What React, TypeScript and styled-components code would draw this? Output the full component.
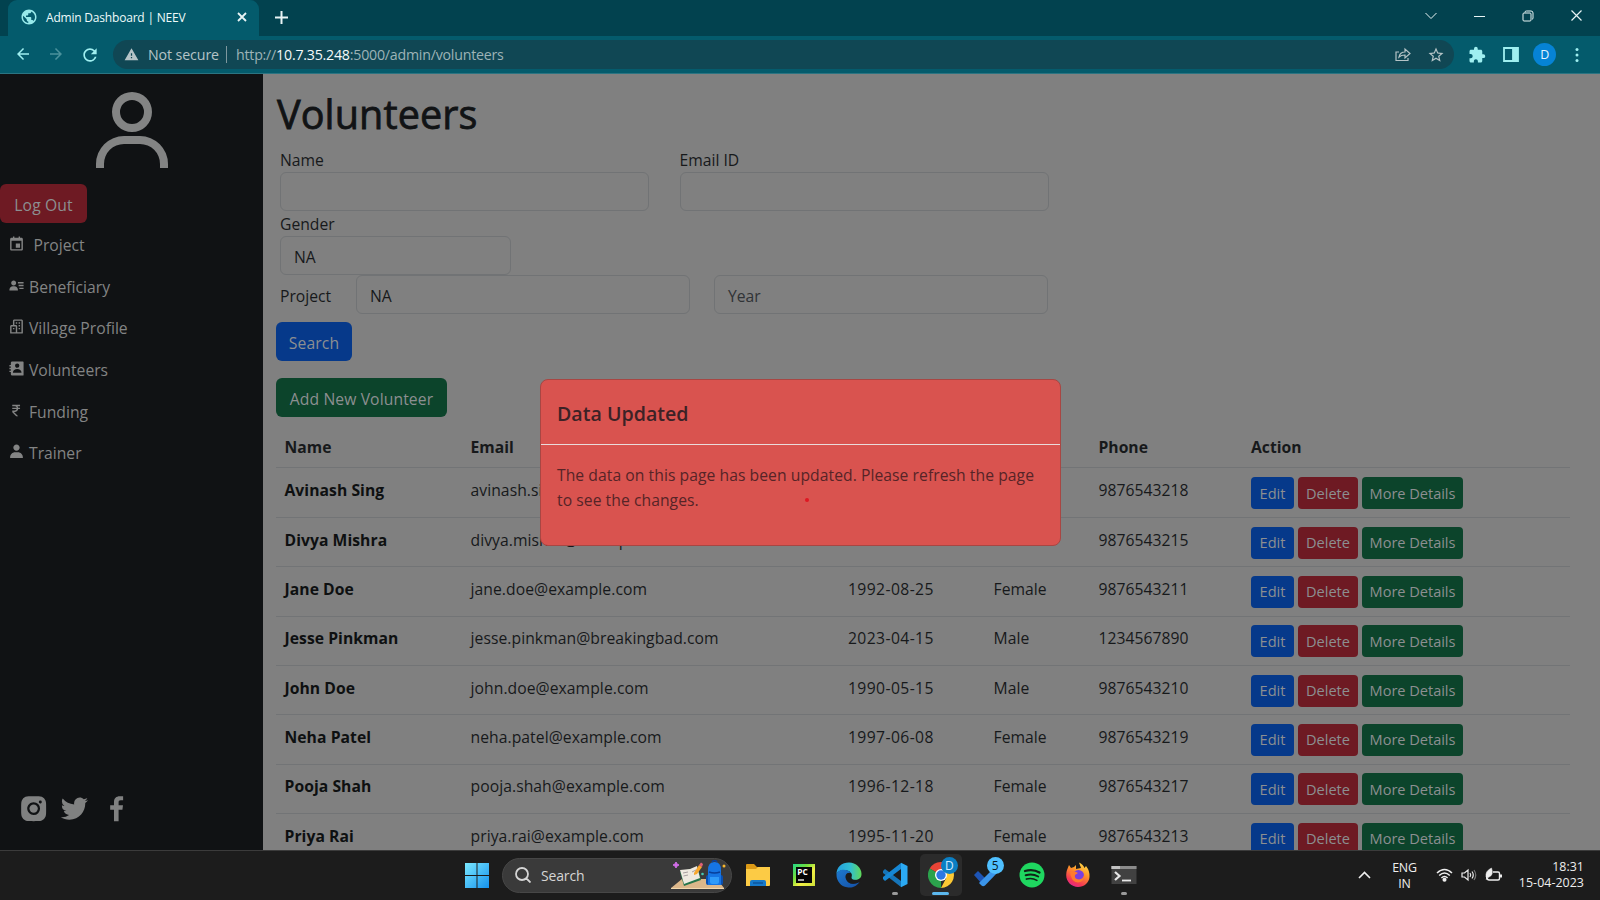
import React from "react";
import styled, { createGlobalStyle } from "styled-components";
import {
  BiUser, BiCalendarEvent, BiSolidUserDetail, BiBuildings, BiSolidContact, BiRupee, BiSolidUser,
  BiLogoInstagramAlt, BiLogoTwitter, BiLogoFacebook,
} from "react-icons/bi";
import { MdPublic, MdExtension, MdWarning, MdArrowBack, MdArrowForward, MdRefresh, MdStarBorder } from "react-icons/md";

const Global = createGlobalStyle`
  *{box-sizing:border-box}
  body{margin:0;overflow:hidden;font-family:"Open Sans","Noto Sans",sans-serif;font-size:15.7px}
  svg{display:block;flex:none}
`;
const Screen = styled.div`width:1600px;height:900px;display:flex;flex-direction:column;overflow:hidden;background:#808080;white-space:nowrap;`;

/* browser chrome */
const TabStrip = styled.header`height:36px;background:#02424f;display:flex;align-items:center;padding-left:8px;color:#e8f4f5;flex:none;`;
const Tab = styled.div`width:251px;height:36px;background:#045b6c;border-radius:9px 9px 0 0;display:flex;align-items:center;padding:0 12.5px 2px 12px;`;
const TabTitle = styled.span`font-size:12px;letter-spacing:-.2px;margin-left:8px;flex:1;color:#eefafa;`;
const NewTab = styled.div`margin-left:16px;flex:1;padding-bottom:1px;`;
const WindowButtons = styled.div`display:flex;align-items:center;gap:37px;padding:0 18px 5px 0;`;
const Toolbar = styled.div`height:38px;background:#045b6c;display:flex;align-items:center;flex:none;color:#9feff0;padding:0 21px 0 14px;border-bottom:1px solid #2b7482;`;
const NavIcons = styled.div`display:flex;gap:15px;width:99px;`;
const Omnibox = styled.div`width:1341px;height:29px;border-radius:15px;background:#104754;display:flex;align-items:center;padding:0 9px 0 11px;color:#b5c4c7;font-size:14.2px;`;
const NotSecure = styled.span`margin-left:9px;width:70px;letter-spacing:-.1px;`;
const Divider = styled.i`width:1px;height:17px;background:#7e989e;margin:0 9px 0 8px;`;
const Url = styled.span`flex:1;letter-spacing:-.22px;color:#9db3b7;b{font-weight:400;color:#f4fafa;}`;
const OmniActions = styled.div`display:flex;gap:16px;align-items:center;`;
const ToolActions = styled.div`display:flex;flex:1;align-items:center;justify-content:space-between;padding-left:14px;`;
const Avatar = styled.div`width:23px;height:23px;border-radius:50%;background:#0683d5;color:#e4f4ff;font-size:12.5px;display:grid;place-items:center;margin:0 2px 0 -2px;`;

/* page */
const Page = styled.div`height:776px;display:flex;position:relative;overflow:hidden;flex:none;`;
const Sidebar = styled.aside`width:263px;background:#101214;color:#838484;display:flex;flex-direction:column;padding-top:10px;flex:none;`;
const Portrait = styled.div`height:100px;display:flex;justify-content:center;`;
const Button = styled.button<{ $bg: string; $w: number }>`
  font:inherit;border:0;padding:3px 0 0;width:${p => p.$w}px;height:39px;border-radius:6px;background:${p => p.$bg};color:#8c8f91;display:block;flex:none;letter-spacing:.1px;`;
const Menu = styled.nav`display:flex;flex-direction:column;padding-top:1.3px;`;
const MenuItem = styled.a<{ $gap: number }>`height:41.65px;padding:0 0 0 8px;display:flex;align-items:center;gap:${p => p.$gap}px;svg{margin-top:-3px;}`;
const Social = styled.div`margin-top:auto;display:flex;gap:8.3px;padding:0 0 25px 16.5px;color:#808181;`;
const Main = styled.main`flex:1;padding:14px 30px 0 13px;color:#17191b;`;
const Title = styled.h1`margin:0;padding-left:1px;font-size:39.6px;line-height:53px;font-weight:500;color:#111315;height:59px;letter-spacing:.1px;-webkit-text-stroke:.8px #111315;`;
const Form = styled.div`padding-left:4px;`;
const FormRow = styled.div<{ $gap: number; $h: number }>`display:flex;gap:${p => p.$gap}px;height:${p => p.$h}px;align-items:center;`;
const Field = styled.label<{ $w: number }>`width:${p => p.$w}px;display:flex;flex-direction:column;line-height:25px;span{padding-top:1px;height:25px;}`;
const Box = styled.div<{ $w: number; $muted?: boolean }>`width:${p => p.$w}px;height:39px;border:1px solid #717375;border-radius:6px;line-height:40px;padding-left:13px;color:${p => (p.$muted ? "#303336" : "#17191b")};`;
const InlineLabel = styled.span`width:76px;padding:2px 0 0;`;
const YearSlot = styled.div`margin-left:24.5px;`;
const Actions = styled.div`display:flex;flex-direction:column;gap:17px;padding-top:8px;`;
const Table = styled.div`margin-top:9.2px;`;
const Row = styled.div<{ $head?: boolean }>`
  display:grid;grid-template-columns:186px 377.5px 145.5px 105px 152.5px 1fr;padding-left:8.5px;width:1294px;
  height:${p => (p.$head ? 42.3 : 49.35)}px;padding-top:${p => (p.$head ? 9 : 9.7)}px;line-height:25px;
  border-bottom:1px solid #727476;font-weight:${p => (p.$head ? 700 : 400)};font-size:15.7px;`;
const Strong = styled.span`font-weight:700;color:#0e1011;letter-spacing:.05px;`;
const Cell = styled.span<{ $ls?: number }>`letter-spacing:${p => p.$ls ?? 0.03}px;`;
const Small = styled.button<{ $bg: string; $w: number }>`
  font:inherit;font-size:14.6px;letter-spacing:-.03px;border:0;padding:0;width:${p => p.$w}px;height:32px;border-radius:4px;background:${p => p.$bg};color:#8c8f91;`;
const SmallGroup = styled.span`display:flex;gap:4px;margin-top:-1px;`;

const Modal = styled.section`position:absolute;left:540px;top:305px;width:521px;height:167px;border-radius:8px;background:#d9534f;border:1px solid #a84643;`;
const ModalHead = styled.h5`margin:0;height:65px;border-bottom:1px solid #eadbdb;padding:18px 0 0 16px;font-size:19.6px;line-height:31px;font-weight:600;color:#3c2226;letter-spacing:0;`;
const ModalBody = styled.p`margin:0;padding:18px 0 0 16px;line-height:25px;color:#562427;letter-spacing:.05px;`;
const Pointer = styled.i`position:absolute;left:264px;top:118px;width:4px;height:4px;border-radius:50%;background:#e01722;`;

/* taskbar */
const Taskbar = styled.footer`height:50px;background:#1c1c1c;border-top:1px solid #3b3b3b;display:flex;align-items:center;color:#eee;padding:0 16px 1px 465px;`;
const SearchPill = styled.div`margin:0 13px;width:230px;height:35px;border-radius:18px;background:#3a3a3a;border:1px solid #474747;display:flex;align-items:center;padding:0 5px 0 12px;font-size:14px;color:#d5d5d5;span{flex:1;margin-left:10px;letter-spacing:-.15px;}`;
const Apps = styled.div`display:flex;gap:3.8px;margin-left:-8.3px;`;
const AppTile = styled.div<{ $on?: boolean; $mark?: string }>`
  width:42px;height:42px;border-radius:5px;background:${p => (p.$on ? "#2b2b2b" : "transparent")};display:grid;place-items:center;position:relative;
  &::after{content:"";position:absolute;bottom:1px;height:3px;border-radius:2px;width:${p => (p.$on ? 17 : 6)}px;background:${p => p.$mark || "transparent"};}`;
const Badge = styled.b<{ $bg: string; $c: string }>`position:absolute;right:4px;top:3px;width:17px;height:17px;border-radius:50%;background:${p => p.$bg};color:${p => p.$c};font-size:12px;line-height:17px;text-align:center;font-weight:400;`;
const Tray = styled.div`margin-left:auto;display:flex;align-items:center;font-size:12.4px;line-height:16.5px;`;
const Lang = styled.div`margin:2px 19px 0 21px;width:25px;text-align:center;letter-spacing:-.2px;`;
const TrayIcons = styled.div`display:flex;align-items:center;gap:8px;`;
const Clock = styled.div`margin-left:16px;width:66px;display:flex;flex-direction:column;align-items:flex-end;letter-spacing:.05px;`;

const BLUE = "#06398a", RED = "#6e1a23", GREEN = "#0c442b";
const people = [
  ["Avinash Sing", "avinash.si", "", "", "9876543218"],
  ["Divya Mishra", "divya.mishra@example.com", "", "", "9876543215"],
  ["Jane Doe", "jane.doe@example.com", "1992-08-25", "Female", "9876543211"],
  ["Jesse Pinkman", "jesse.pinkman@breakingbad.com", "2023-04-15", "Male", "1234567890"],
  ["John Doe", "john.doe@example.com", "1990-05-15", "Male", "9876543210"],
  ["Neha Patel", "neha.patel@example.com", "1997-06-08", "Female", "9876543219"],
  ["Pooja Shah", "pooja.shah@example.com", "1996-12-18", "Female", "9876543217"],
  ["Priya Rai", "priya.rai@example.com", "1995-11-20", "Female", "9876543213"],
];
const menu: [React.ComponentType<{ size?: number }>, string][] = [
  [BiCalendarEvent, "Project"], [BiSolidUserDetail, "Beneficiary"], [BiBuildings, "Village Profile"],
  [BiSolidContact, "Volunteers"], [BiRupee, "Funding"], [BiSolidUser, "Trainer"],
];

const Line = ({ d, w = 12, h = 12, sw = 1 }: { d: string; w?: number; h?: number; sw?: number }) => (
  <svg width={w} height={h} viewBox={`0 0 ${w} ${h}`} fill="none" stroke="currentColor" strokeWidth={sw}><path d={d} /></svg>
);

const Illustration = () => (
  <svg width="56" height="30" viewBox="0 0 56 30">
    <path d="M1 28 12 19H47L54 28Z" fill="#dcb78a" /><path d="M1 28H54V29H1Z" fill="#f2d8ae" />
    <path d="M10 12 20 9 28 8 31 20 14 26Z" fill="#26754b" /><path d="M10 10 20 9 22 21 14 24ZM20 9 27 6 30 18 22 21Z" fill="#eee9df" />
    <path d="M13 13 18 12M13.500 16 18 15M22 12 26 10" stroke="#a79f9f" />
    <path d="M24 13 29 5 32 7 27 14 24 15Z" fill="#f7a72c" /><path d="M29 5 31 2.500 33 4 32 7Z" fill="#e16177" />
    <path d="M38 10Q38 2 44.500 2T51 10V25H38Z" fill="#1675e4" /><path d="M36 17Q36 15 38 15V25Q36 25 36 23ZM51 15Q53 15 53 17V23Q53 25 51 25Z" fill="#0b4faf" />
    <path d="M40 17H49V22Q49 24 47 24H42Q40 24 40 22Z" fill="#2f9bfa" /><path d="M42 2Q44.500 -1 47 2M39 12Q44.500 14 50 12" fill="none" stroke="#083f9b" strokeWidth="1.500" />
    <path d="M6 2 7 4 9 5 7 6 6 8 5 6 3 5 5 4Z" fill="#d26ee8" stroke="#d26ee8" /><circle cx="54" cy="6" r="1.500" fill="#f6b62e" /><circle cx="32.500" cy="14" r="1.300" fill="#43cbb7" />
  </svg>
);
const Folder = () => (
  <svg width="26" height="24" viewBox="0 0 26 24"><path d="M1 2Q1 1 2 1H9L12 4H24V12H1Z" fill="#dc9a16" /><path d="M1 6H11L13 4H25V22Q25 23 24 23H1Z" fill="#fccb45" /><path d="M5 23V19Q5 17 7 17H19Q21 17 21 19V23Z" fill="#1679ca" /><path d="M8 20H18" stroke="#0c549b" strokeWidth="1.500" /></svg>
);
const PyCharm = () => (
  <svg width="22" height="22" viewBox="0 0 22 22"><defs><linearGradient id="pc" x2="1" y2="1"><stop stopColor="#21d789" /><stop offset=".35" stopColor="#73df3c" /><stop offset=".6" stopColor="#f3ef45" /><stop offset="1" stopColor="#cddf38" /></linearGradient></defs><path d="M0 0H22V22H0Z" fill="url(#pc)" /><path d="M3 3H19V19H3Z" fill="#050505" /><text x="4.300" y="11" fontSize="8.300" fontWeight="700" fontFamily="Open Sans" fill="#fff">PC</text><path d="M5 16H11" stroke="#fff" strokeWidth="1.300" /></svg>
);
const Edge = () => (
  <svg width="26" height="26" viewBox="0 0 26 26"><defs><linearGradient id="eg"><stop stopColor="#239fe0" /><stop offset=".55" stopColor="#31bed2" /><stop offset="1" stopColor="#60d957" /></linearGradient><linearGradient id="eb" y2="1"><stop stopColor="#1d79cf" /><stop offset="1" stopColor="#1550a6" /></linearGradient></defs>
    <path d="M.500 13C0 5 6 .500 13 .500S25.500 6 25.500 12c0 4-3 6-6.500 6-3 0-4-1.500-3.500-3 .600-1.600.500-3-.500-4C11 6 1 8 .500 13Z" fill="url(#eg)" />
    <path d="M.500 13C1 7 11 6 15 11c-5-1-6 3-5 6 1.500 5 8 6 13.500 3C20 25 16 26 11 25.300 5 24.500 .500 19 .500 13Z" fill="url(#eb)" /><path d="M10 17C9 13 10 11 14.500 11 16 13 15 14.500 15.300 16 16 18 20 18.500 23 17c1.500-.500 1.800.500 1 2C20 23.500 12 23 10 17Z" fill="#1c1c1c" opacity=".65" /></svg>
);
const Code = () => (
  <svg width="26" height="26" viewBox="0 0 26 26"><path d="M1 9 3 7 19 19V25L1 11Z" fill="#1675b9" /><path d="M1 17 3 19 19 7V1L1 15Z" fill="#1687d4" /><path d="M18.500 8V18L12 13Z" fill="#1c1c1c" /><path d="M19 .800 25.500 4V22L19 25.200Z" fill="#2ba9f3" /></svg>
);
const Chrome = () => (
  <svg width="26" height="26" viewBox="0 0 26 26"><path d="M13 13 1.740 6.500A13 13 0 0 1 24.260 6.500Z" fill="#e94436" /><path d="M13 13 13 26A13 13 0 0 1 1.740 6.500Z" fill="#2ba24c" /><path d="M13 7H24.500A13 13 0 0 1 13 26L18.200 16Z" fill="#fcc934" /><circle cx="13" cy="13" r="6" fill="#fff" /><circle cx="13" cy="13" r="4.700" fill="#2b78e4" /></svg>
);
const Todo = () => (
  <svg width="26" height="26" viewBox="0 0 26 26"><path d="M0 13 4 9 12 17 8 22Z" fill="#1d54b5" /><path d="M6 20 20 6 24 10 11 23.500Q9 25 7.500 23.500L5 21Z" fill="#3b95ea" /></svg>
);
const Spotify = () => (
  <svg width="26" height="26" viewBox="0 0 26 26" fill="none" stroke="#102016" strokeLinecap="round"><circle cx="13" cy="13" r="12.500" fill="#1fd760" stroke="none" /><path d="M6 9Q14 6.500 20.500 10.500" strokeWidth="2.300" /><path d="M6.700 13.200Q13.500 11.200 19.200 14.500" strokeWidth="2" /><path d="M7.400 17.100Q13 15.500 17.900 18.400" strokeWidth="1.600" /></svg>
);
const Firefox = () => (
  <svg width="26" height="26" viewBox="0 0 26 26"><defs><linearGradient id="ff" x1=".8" y1="0" x2=".3" y2="1"><stop stopColor="#ffe14a" /><stop offset=".4" stopColor="#ff9428" /><stop offset=".8" stopColor="#f43854" /><stop offset="1" stopColor="#e5268d" /></linearGradient></defs><path d="M2 8 4 3 6 6 9 5 11 3 11 7 16 6 14 .500Q18 2 19.500 6L21 4Q25 9 24.500 15C24 21 19 25 13 25S1 20 1.200 13Q1.200 10 2 8Z" fill="url(#ff)" /><circle cx="13.500" cy="13.500" r="5.500" fill="#7a3fe0" /><path d="M5 10Q9 8 13 11L10 13Q9 17 14 17.500 18 17 19 13 20 20 13 20.500 6 20 5 10Z" fill="#ff7a2e" /></svg>
);
const Terminal = () => (
  <svg width="26" height="20" viewBox="0 0 26 20"><path d="M.500 1H25.500V19H.500Z" fill="#414141" /><path d="M.500 1H25.500V4H.500Z" fill="#8b8b8b" /><path d="M.500 1H9V4H.500Z" fill="#c2c2c2" /><path d="M4 7 8.500 11 4 15" fill="none" stroke="#e8e8e8" strokeWidth="2.200" /><path d="M11 15.500H20" stroke="#e8e8e8" strokeWidth="1.800" /></svg>
);

export default function App() {
  return (
    <Screen>
      <Global />
      <TabStrip>
        <Tab>
          <MdPublic size={18} color="#97e9ea" />
          <TabTitle>Admin Dashboard | NEEV</TabTitle>
          <Line d="M1 1 9 9M9 1 1 9" w={10} h={10} sw={1.8} />
        </Tab>
        <NewTab><Line d="M6.500 0V13M0 6.500H13" w={13} h={13} sw={2} /></NewTab>
        <WindowButtons>
          <Line d="M.500 3 6 8.500 11.500 3" w={12} h={12} />
          <Line d="M0 6.500H11" w={11} h={12} />
          <Line d="M3 2.500V2Q3 1 4.500 1H9Q11 1 11 3V8Q11 9 10 9.500M2 3H8Q9 3 9 4V10Q9 11 8 11H2Q1 11 1 10V4Q1 3 2 3Z" />
          <Line d="M.500 .500 10.500 10.500M10.500 .500 .500 10.500" w={11} h={11} sw={1.2} />
        </WindowButtons>
      </TabStrip>
      <Toolbar>
        <NavIcons>
          <MdArrowBack size={18} /><MdArrowForward size={18} color="#4b929c" /><MdRefresh size={20} />
        </NavIcons>
        <Omnibox>
          <MdWarning size={15} />
          <NotSecure>Not secure</NotSecure>
          <Divider />
          <Url>http://<b>10.7.35.248</b>:5000/admin/volunteers</Url>
          <OmniActions>
            <Line d="M4 5H1V13.500H13V11M4 10Q5 5 10 5V2L15 6.500 10 11V8Q6 8 4 10Z" w={16} h={15} sw={1.2} />
            <MdStarBorder size={18} />
          </OmniActions>
        </Omnibox>
        <ToolActions>
          <MdExtension size={18} />
          <Line d="M1 1H15V14H1ZM10 1V14M11 1V14M12.500 1V14M14 1V14" w={16} h={15} sw={1.8} />
          <Avatar>D</Avatar>
          <svg width="4" height="16" fill="currentColor"><circle cx="2" cy="2.500" r="1.500" /><circle cx="2" cy="8" r="1.500" /><circle cx="2" cy="13.500" r="1.500" /></svg>
        </ToolActions>
      </Toolbar>

      <Page>
        <Sidebar>
          <Portrait><BiUser size={96} /></Portrait>
          <Button $bg={RED} $w={87}>Log Out</Button>
          <Menu>
            {menu.map(([Icon, name], i) => (
              <MenuItem key={name} $gap={i === 0 ? 8.5 : 4}><Icon size={17} />{name}</MenuItem>
            ))}
          </Menu>
          <Social><BiLogoInstagramAlt size={33.3} /><BiLogoTwitter size={33.3} /><BiLogoFacebook size={33.3} /></Social>
        </Sidebar>
        <Main>
          <Title>Volunteers</Title>
          <Form>
            <FormRow $gap={30.5} $h={64}>
              <Field $w={369}><span>Name</span><Box $w={369} /></Field>
              <Field $w={369}><span>Email ID</span><Box $w={369} /></Field>
            </FormRow>
            <FormRow $gap={0} $h={64}><Field $w={231}><span>Gender</span><Box $w={231}>NA</Box></Field></FormRow>
            <FormRow $gap={0} $h={39}>
              <InlineLabel>Project</InlineLabel>
              <Box $w={333.5}>NA</Box>
              <YearSlot><Box $w={334} $muted>Year</Box></YearSlot>
            </FormRow>
          </Form>
          <Actions>
            <Button $bg={BLUE} $w={76}>Search</Button>
            <Button $bg={GREEN} $w={171}>Add New Volunteer</Button>
          </Actions>
          <Table>
            <Row $head><span>Name</span><span>Email</span><span /><span /><span>Phone</span><span>Action</span></Row>
            {people.map(([name, email, dob, gender, phone]) => (
              <Row key={name}>
                <Strong>{name}</Strong>
                <Cell $ls={0.06}>{email}</Cell><Cell $ls={0.4}>{dob}</Cell><Cell>{gender}</Cell><Cell>{phone}</Cell>
                <SmallGroup><Small $bg={BLUE} $w={43}>Edit</Small><Small $bg={RED} $w={60}>Delete</Small><Small $bg={GREEN} $w={101}>More Details</Small></SmallGroup>
              </Row>
            ))}
          </Table>
        </Main>
        <Modal>
          <ModalHead>Data Updated</ModalHead>
          <ModalBody>The data on this page has been updated. Please refresh the page<br />to see the changes.</ModalBody>
          <Pointer />
        </Modal>
      </Page>

      <Taskbar>
        <svg width="24" height="25" viewBox="0 0 24 25"><defs><linearGradient id="win" x2="1" y2="1"><stop stopColor="#7be8ff" /><stop offset="1" stopColor="#1492ef" /></linearGradient></defs><path d="M0 0H11.500V12H0ZM12.500 0H24V12H12.500ZM0 13H11.500V25H0ZM12.500 13H24V25H12.500Z" fill="url(#win)" /></svg>
        <SearchPill>
          <Line d="M11.500 11.500 15.500 15.500M13 7A6 6 0 1 1 1 7A6 6 0 1 1 13 7Z" w={16} h={16} sw={1.8} />
          <span>Search</span>
          <Illustration />
        </SearchPill>
        <Apps>
          <AppTile><Folder /></AppTile>
          <AppTile><PyCharm /></AppTile>
          <AppTile><Edge /></AppTile>
          <AppTile $mark="#9a9a9a"><Code /></AppTile>
          <AppTile $on $mark="#5cb8ee"><Chrome /><Badge $bg="#0b7fc4" $c="#cfeaff">D</Badge></AppTile>
          <AppTile><Todo /><Badge $bg="#4fc0ff" $c="#0a1a24">5</Badge></AppTile>
          <AppTile><Spotify /></AppTile>
          <AppTile><Firefox /></AppTile>
          <AppTile $mark="#9a9a9a"><Terminal /></AppTile>
        </Apps>
        <Tray>
          <Line d="M1 9 6.500 3.500 12 9" w={13} h={12} sw={1.6} />
          <Lang>ENG<br />IN</Lang>
          <TrayIcons>
            <svg width="17" height="14" viewBox="0 0 17 14" fill="none" stroke="currentColor" strokeWidth="1.500"><path d="M1 5Q8.500-2 16 5M3.200 7.500Q8.500 2.500 13.800 7.500M5.400 10Q8.500 7 11.600 10" /><circle cx="8.500" cy="11.800" r="1.300" fill="currentColor" /></svg>
            <svg width="16" height="14" viewBox="0 0 16 14" fill="none" stroke="currentColor" strokeWidth="1.200"><path d="M1 5H3.500L7 2V12L3.500 9H1ZM9 5Q10.500 7 9 9M11 3.500Q13.500 7 11 10.500" /><path d="M13 2Q16.500 7 13 12" stroke="#777" /></svg>
            <svg width="17" height="16" viewBox="0 0 17 16" fill="none" stroke="currentColor" strokeWidth="1.400"><path d="M8 5H13Q14.500 5 14.500 6.500V11.500Q14.500 13 13 13H4Q2.500 13 2 11" /><path d="M16 7.500V10.500" strokeWidth="2" /><path d="M1 10Q0 4 6.500 1Q9 8 4 10Q2 10.500 1 13" fill="currentColor" strokeWidth=".5" /></svg>
          </TrayIcons>
          <Clock><span>18:31</span><span>15-04-2023</span></Clock>
        </Tray>
      </Taskbar>
    </Screen>
  );
}
